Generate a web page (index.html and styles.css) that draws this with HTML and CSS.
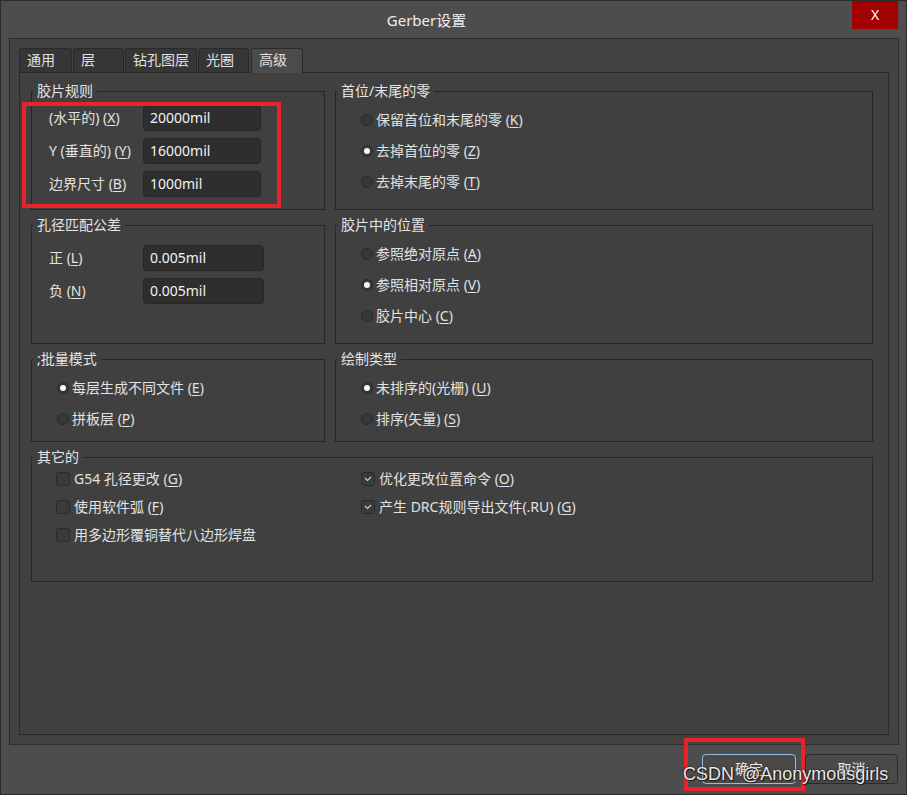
FILE: index.html
```html
<!DOCTYPE html>
<html lang="zh-CN">
<head>
<meta charset="utf-8">
<title>Gerber设置</title>
<link rel="stylesheet" href="styles.css">
</head>
<body>
<div class="window">
  <div class="titlebar">
    <div class="title">Gerber设置</div>
    <div class="close">X</div>
  </div>
  <div class="panel">
    <div class="tabs">
      <div class="tab w1">通用</div>
      <div class="tab w2">层</div>
      <div class="tab w3">钻孔图层</div>
      <div class="tab w4">光圈</div>
      <div class="tab w5 active">高级</div>
    </div>
    <div class="content">
      <div class="groups">
        <div class="group">
          <div class="legend">胶片规则</div>
          <div class="fields">
            <div class="label">(水平的) (<u>X</u>)</div><div class="input">20000mil</div>
            <div class="label">Y (垂直的) (<u>Y</u>)</div><div class="input">16000mil</div>
            <div class="label">边界尺寸 (<u>B</u>)</div><div class="input">1000mil</div>
          </div>
        </div>
        <div class="group">
          <div class="legend">首位/末尾的零</div>
          <div class="options">
            <div class="option"><span class="radio"></span>保留首位和末尾的零 (<u>K</u>)</div>
            <div class="option"><span class="radio on"></span>去掉首位的零 (<u>Z</u>)</div>
            <div class="option"><span class="radio"></span>去掉末尾的零 (<u>T</u>)</div>
          </div>
        </div>
        <div class="group">
          <div class="legend">孔径匹配公差</div>
          <div class="fields tol">
            <div class="label">正 (<u>L</u>)</div><div class="input">0.005mil</div>
            <div class="label">负 (<u>N</u>)</div><div class="input">0.005mil</div>
          </div>
        </div>
        <div class="group">
          <div class="legend">胶片中的位置</div>
          <div class="options">
            <div class="option"><span class="radio"></span>参照绝对原点 (<u>A</u>)</div>
            <div class="option"><span class="radio on"></span>参照相对原点 (<u>V</u>)</div>
            <div class="option"><span class="radio"></span>胶片中心 (<u>C</u>)</div>
          </div>
        </div>
        <div class="group">
          <div class="legend">;批量模式</div>
          <div class="options">
            <div class="option"><span class="radio on"></span>每层生成不同文件 (<u>E</u>)</div>
            <div class="option"><span class="radio"></span>拼板层 (<u>P</u>)</div>
          </div>
        </div>
        <div class="group">
          <div class="legend">绘制类型</div>
          <div class="options">
            <div class="option"><span class="radio on"></span>未排序的(光栅) (<u>U</u>)</div>
            <div class="option"><span class="radio"></span>排序(矢量) (<u>S</u>)</div>
          </div>
        </div>
        <div class="group wide">
          <div class="legend">其它的</div>
          <div class="checks">
            <div class="check-item"><span class="box"></span>G54 孔径更改 (<u>G</u>)</div>
            <div class="check-item"><span class="box"><svg width="12" height="12" viewBox="0 0 12 12"><polyline points="3,5 5.5,7.5 9,4" fill="none" stroke="#cfcfcf" stroke-width="1.1"/></svg></span>优化更改位置命令 (<u>O</u>)</div>
            <div class="check-item"><span class="box"></span>使用软件弧 (<u>F</u>)</div>
            <div class="check-item"><span class="box"><svg width="12" height="12" viewBox="0 0 12 12"><polyline points="3,5 5.5,7.5 9,4" fill="none" stroke="#cfcfcf" stroke-width="1.1"/></svg></span>产生 DRC规则导出文件(.RU) (<u>G</u>)</div>
            <div class="check-item"><span class="box"></span>用多边形覆铜替代八边形焊盘</div>
          </div>
        </div>
      </div>
    </div>
  </div>
  <div class="footer">
    <button class="btn primary">确定</button>
    <button class="btn">取消</button>
  </div>
  <div class="mark mark-film"></div>
  <div class="mark mark-ok"></div>
  <div class="watermark">CSDN @Anonymousgirls</div>
</div>
</body>
</html>
```

FILE: styles.css
```css
* { box-sizing: border-box; }
html, body { margin: 0; padding: 0; background: #4d4d4d; }
body {
  font-family: "Noto Sans", "Noto Sans CJK SC", sans-serif;
  font-size: 14px;
  line-height: 18px;
  color: #e2e2e2;
}
u { text-decoration: underline; text-underline-offset: 2px; }

.window {
  position: relative;
  width: 907px;
  height: 795px;
  border: 1px solid #2b2b2b;
  background: #4d4d4d;
  display: flex;
  flex-direction: column;
}

.titlebar { flex: none; height: 37px; display: flex; align-items: center; }
.title { flex: 1; text-align: center; font-size: 15px; line-height: 20px; color: #ededed; }
.close {
  align-self: flex-start;
  width: 46px;
  height: 28px;
  margin-right: 8px;
  background: #a30000;
  color: #ffffff;
  font-size: 14px;
  display: flex;
  align-items: center;
  justify-content: center;
}

.panel {
  flex: none;
  height: 707px;
  margin: 0 7px 0 8px;
  border: 1px solid #2e2e2e;
  background: #424242;
  padding: 9px;
  display: flex;
  flex-direction: column;
}

.tabs { flex: none; display: flex; height: 24px; position: relative; z-index: 1; }
.tab {
  height: 24px;
  background: #363636;
  border: 1px solid #2a2a2a;
  border-bottom: none;
  border-radius: 3px 3px 0 0;
  padding-left: 7px;
  line-height: 22px;
  margin-right: 1px;
  color: #e0e0e0;
}
.tab.w1 { width: 53px; }
.tab.w2 { width: 51px; }
.tab.w3 { width: 72px; }
.tab.w4 { width: 51px; margin-right: 2px; }
.tab.w5 { width: 52px; }
.tab.active { background: #4b4b4b; height: 25px; }

.content {
  flex: 1;
  border: 1px solid #2a2a2a;
  background: #404040;
  padding: 18px 0 0 11px;
}

.groups {
  display: grid;
  grid-template-columns: 294px 538px;
  grid-template-rows: 119px 119px 83px 125px;
  gap: 15px 10px;
}
.group { position: relative; border: 1px solid #262626; }
.group.wide { grid-column: 1 / 3; }
.legend {
  position: absolute;
  top: -10px;
  left: 1px;
  padding: 0 4px;
  background: #404040;
  line-height: 18px;
  color: #e4e4e4;
}

.fields {
  display: grid;
  grid-template-columns: 94px 118px;
  row-gap: 7px;
  align-items: center;
  padding: 13px 0 0 17px;
}
.fields.tol { grid-template-columns: 94px 121px; padding-top: 19px; }
.input {
  height: 26px;
  background: #2e2e2e;
  border: 1px solid #272727;
  border-radius: 4px;
  padding-left: 6px;
  line-height: 24px;
  color: #f2f2f2;
}

.options { padding: 12px 0 0 25px; }
.option { height: 31px; display: flex; align-items: center; }
.radio {
  flex: none;
  width: 12px;
  height: 12px;
  border-radius: 50%;
  background: #383838;
  border: 1px solid #2a2a2a;
  margin-right: 3px;
  display: flex;
  align-items: center;
  justify-content: center;
}
.radio.on::after {
  content: "";
  width: 6px;
  height: 6px;
  border-radius: 50%;
  background: #f6f6f6;
}

.checks {
  display: grid;
  grid-template-columns: 305px 1fr;
  grid-auto-rows: 28px;
  padding: 7px 0 0 24px;
}
.check-item { display: flex; align-items: center; }
.box {
  flex: none;
  width: 14px;
  height: 14px;
  border: 1px solid #2a2a2a;
  border-radius: 3px;
  background: #3a3a3a;
  margin-right: 4px;
  display: flex;
  align-items: center;
  justify-content: center;
}

.footer {
  flex: 1;
  display: flex;
  justify-content: flex-end;
  align-items: flex-start;
  gap: 9px;
  padding: 9px 8px 0 0;
}
.btn {
  height: 30px;
  width: 93px;
  border: 1px solid #2a2a2a;
  border-radius: 4px;
  background: #4a4a4a;
  color: #e8e8e8;
  font: inherit;
  padding: 0;
}
.btn.primary { width: 94px; border-color: #8fbfe6; }

.mark { position: absolute; border: 4px solid #e8232b; }
.mark-film { left: 21px; top: 101px; width: 259px; height: 106px; }
.mark-ok { left: 683px; top: 737px; width: 121px; height: 53px; }

.watermark {
  position: absolute;
  left: 682px;
  top: 762px;
  font-family: "Liberation Sans", Arial, sans-serif;
  font-size: 18px;
  line-height: 22px;
  word-spacing: 3px;
  color: rgba(255, 255, 255, 0.92);
  text-shadow: 0 0 2px #000, 1px 1px 1px #222;
  white-space: nowrap;
}
```
